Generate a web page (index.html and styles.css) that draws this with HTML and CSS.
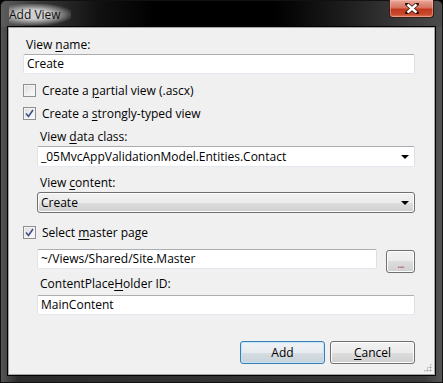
FILE: index.html
```html
<!DOCTYPE html>
<html lang="en">
<head>
    <meta charset="UTF-8">
    <title>Add View</title>
    <link rel="stylesheet" href="styles.css">
</head>
<body>
    <div class="window">
        <div class="titlebar">
            <span class="title">Add View</span>
            <div class="close">
                <svg width="14" height="11" viewBox="0 0 14 11">
                    <path d="M2 1 L12 10 M12 1 L2 10" stroke="#3a1208" stroke-width="4" stroke-linecap="round"/>
                    <path d="M2.5 1.5 L11.5 9.5 M11.5 1.5 L2.5 9.5" stroke="#ffffff" stroke-width="2.4"/>
                </svg>
            </div>
        </div>

        <div class="client">
            <div class="lbl first">View <u>n</u>ame:</div>
            <div class="textbox">Create</div>

            <div class="check first-check">
                <span class="box"></span>
                <span>Create a <u>p</u>artial view (.ascx)</span>
            </div>
            <div class="check">
                <span class="box">
                    <svg width="9" height="9" viewBox="0 0 9 9"><path d="M1 4.5 L3.5 7.5 L8 1" fill="none" stroke="#3d4f8c" stroke-width="1.6"/></svg>
                </span>
                <span>Create a <u>s</u>trongly-typed view</span>
            </div>

            <div class="indent">
                <div class="lbl gap7">View <u>d</u>ata class:</div>
                <div class="combo edit">
                    <span>_05MvcAppValidationModel.Entities.Contact</span>
                    <span class="arrow"></span>
                </div>
                <div class="lbl gap8">View <u>c</u>ontent:</div>
                <div class="combo list">
                    <span>Create</span>
                    <span class="arrow"></span>
                </div>
            </div>

            <div class="check master-check">
                <span class="box">
                    <svg width="9" height="9" viewBox="0 0 9 9"><path d="M1 4.5 L3.5 7.5 L8 1" fill="none" stroke="#3d4f8c" stroke-width="1.6"/></svg>
                </span>
                <span>Select <u>m</u>aster page</span>
            </div>

            <div class="indent">
                <div class="path-row">
                    <div class="textbox grow">~/Views/Shared/Site.Master</div>
                    <button class="btn browse">...</button>
                </div>
                <div class="lbl gap3">ContentPlace<u>H</u>older ID:</div>
                <div class="textbox tb-low">MainContent</div>
            </div>

            <div class="actions">
                <button class="btn default">Add</button>
                <button class="btn"><u>C</u>ancel</button>
            </div>
            <span class="grip"></span>
        </div>
    </div>
</body>
</html>
```

FILE: styles.css
```css
* {
    box-sizing: border-box;
}
body {
    margin: 0;
    padding: 0;
    background: #000;
    font-family: 'Open Sans', 'Noto Sans', sans-serif;
    font-size: 12px;
    color: #000;
}
u {
    text-decoration-thickness: 1px;
    text-underline-offset: 2px;
}
.window {
    width: 443px;
    height: 383px;
    padding: 0 7px 8px 7px;
    border: 1px solid #111;
    border-radius: 6px 6px 0 0;
    background: linear-gradient(to right, #555 0%, #2b2b2b 4%, #3a3a3a 96%, #555 100%);
}
.titlebar {
    height: 26px;
    margin: 0 -7px;
    padding: 0 8px;
    position: relative;
    display: flex;
    align-items: center;
    background: linear-gradient(to right, #5c5c5c 0%, #3a3a3a 8%, #111 22%, #000 35%, #000 62%, #1d1d1d 78%, #3c3c3c 92%, #4a4a4a 100%);
    border-radius: 6px 6px 0 0;
}
.title {
    color: #111;
    padding: 2px 10px 2px 0;
    margin-top: 1px;
    background: radial-gradient(ellipse at 40% 50%, rgba(215, 215, 215, 0.95) 30%, rgba(170, 170, 170, 0.5) 60%, rgba(120, 120, 120, 0) 78%);
}
.close {
    position: absolute;
    top: -1px;
    right: 8px;
    width: 45px;
    height: 18px;
    border: 1px solid #3b1d17;
    border-top: none;
    border-radius: 0 0 4px 4px;
    background: linear-gradient(to bottom, #e9a99b 0%, #d7735f 45%, #c1391f 55%, #c84a2f 85%, #e07d5e 100%);
    box-shadow: inset 0 0 0 1px rgba(255, 200, 190, 0.45);
    display: flex;
    align-items: center;
    justify-content: center;
}
.client {
    position: relative;
    height: 348px;
    background: #f0f0f0;
    border: 1px solid #a5a5a5;
    box-shadow: 0 0 0 1px #000;
    padding: 9px 19px 0 14px;
}
.lbl {
    height: 16px;
    line-height: 16px;
    padding-left: 3px;
    margin-bottom: 1px;
}
.gap7 { margin-top: 7px; }
.gap8 { margin-top: 8px; }
.gap3 { margin-top: 3px; margin-bottom: 3px; }
.textbox {
    height: 20px;
    line-height: 18px;
    padding: 0 3px;
    background: #fff;
    border: 1px solid;
    border-color: #abadb3 #dbdfe6 #e3e9ef #e2e3ea;
    border-radius: 2px;
    white-space: nowrap;
}
.grow {
    flex: 1;
}
.check {
    height: 17px;
    display: flex;
    align-items: center;
    gap: 6px;
    margin-top: 6px;
}
.first-check { margin-top: 8px; }
.master-check { margin-top: 11px; margin-bottom: 8px; }
.box {
    width: 13px;
    height: 13px;
    border: 1px solid #8e8f8f;
    background: linear-gradient(135deg, #dcdcdc 0%, #f4f4f4 70%, #fdfdfd 100%);
    box-shadow: inset 0 0 0 1px #f4f4f4;
    display: flex;
    align-items: center;
    justify-content: center;
}
.indent {
    padding-left: 14px;
}
.combo {
    height: 21px;
    display: flex;
    align-items: center;
    justify-content: space-between;
    padding: 0 5px 0 3px;
}
.combo.edit {
    background: #fff;
    border: 1px solid;
    border-color: #abadb3 #dbdfe6 #e3e9ef #e2e3ea;
    border-radius: 2px;
}
.combo.list {
    border: 1px solid #707070;
    border-radius: 3px;
    background: linear-gradient(to bottom, #f2f2f2 0%, #ebebeb 50%, #dddddd 50%, #cfcfcf 100%);
    box-shadow: inset 0 0 0 1px #fcfcfc;
}
.arrow {
    width: 0;
    height: 0;
    border-left: 4px solid transparent;
    border-right: 4px solid transparent;
    border-top: 4px solid #000;
}
.path-row {
    display: flex;
    align-items: flex-start;
    gap: 9px;
}
.btn {
    font-family: inherit;
    font-size: 12px;
    color: #000;
    height: 23px;
    width: 85px;
    padding: 0;
    border: 1px solid #707070;
    border-radius: 3px;
    background: linear-gradient(to bottom, #f2f2f2 0%, #ebebeb 50%, #dddddd 50%, #cfcfcf 100%);
    box-shadow: inset 0 0 0 1px #fcfcfc;
}
.btn.browse {
    width: 29px;
    margin-top: 1px;
    color: #b04a7c;
    line-height: 14px;
    padding-top: 4px;
    letter-spacing: -1px;
}
.btn.default {
    border-color: #3c7fb1;
    box-shadow: inset 0 0 0 1px #bfe6f8;
    background: linear-gradient(to bottom, #eaf6fd 0%, #d9f0fc 50%, #bee6fd 50%, #a7d9f5 100%);
    background: linear-gradient(to bottom, #f0f3f6 0%, #e6ebef 50%, #d6dde3 50%, #c9d3da 100%);
}
.actions {
    display: flex;
    justify-content: flex-end;
    gap: 5px;
    margin-top: 26px;
}
.grip {
    position: absolute;
    right: 2px;
    bottom: 2px;
    width: 9px;
    height: 9px;
    background: radial-gradient(circle, #a0a0a0 0.8px, transparent 1.2px) 0 0 / 3px 3px;
    clip-path: polygon(100% 0, 100% 100%, 0 100%);
}
```
